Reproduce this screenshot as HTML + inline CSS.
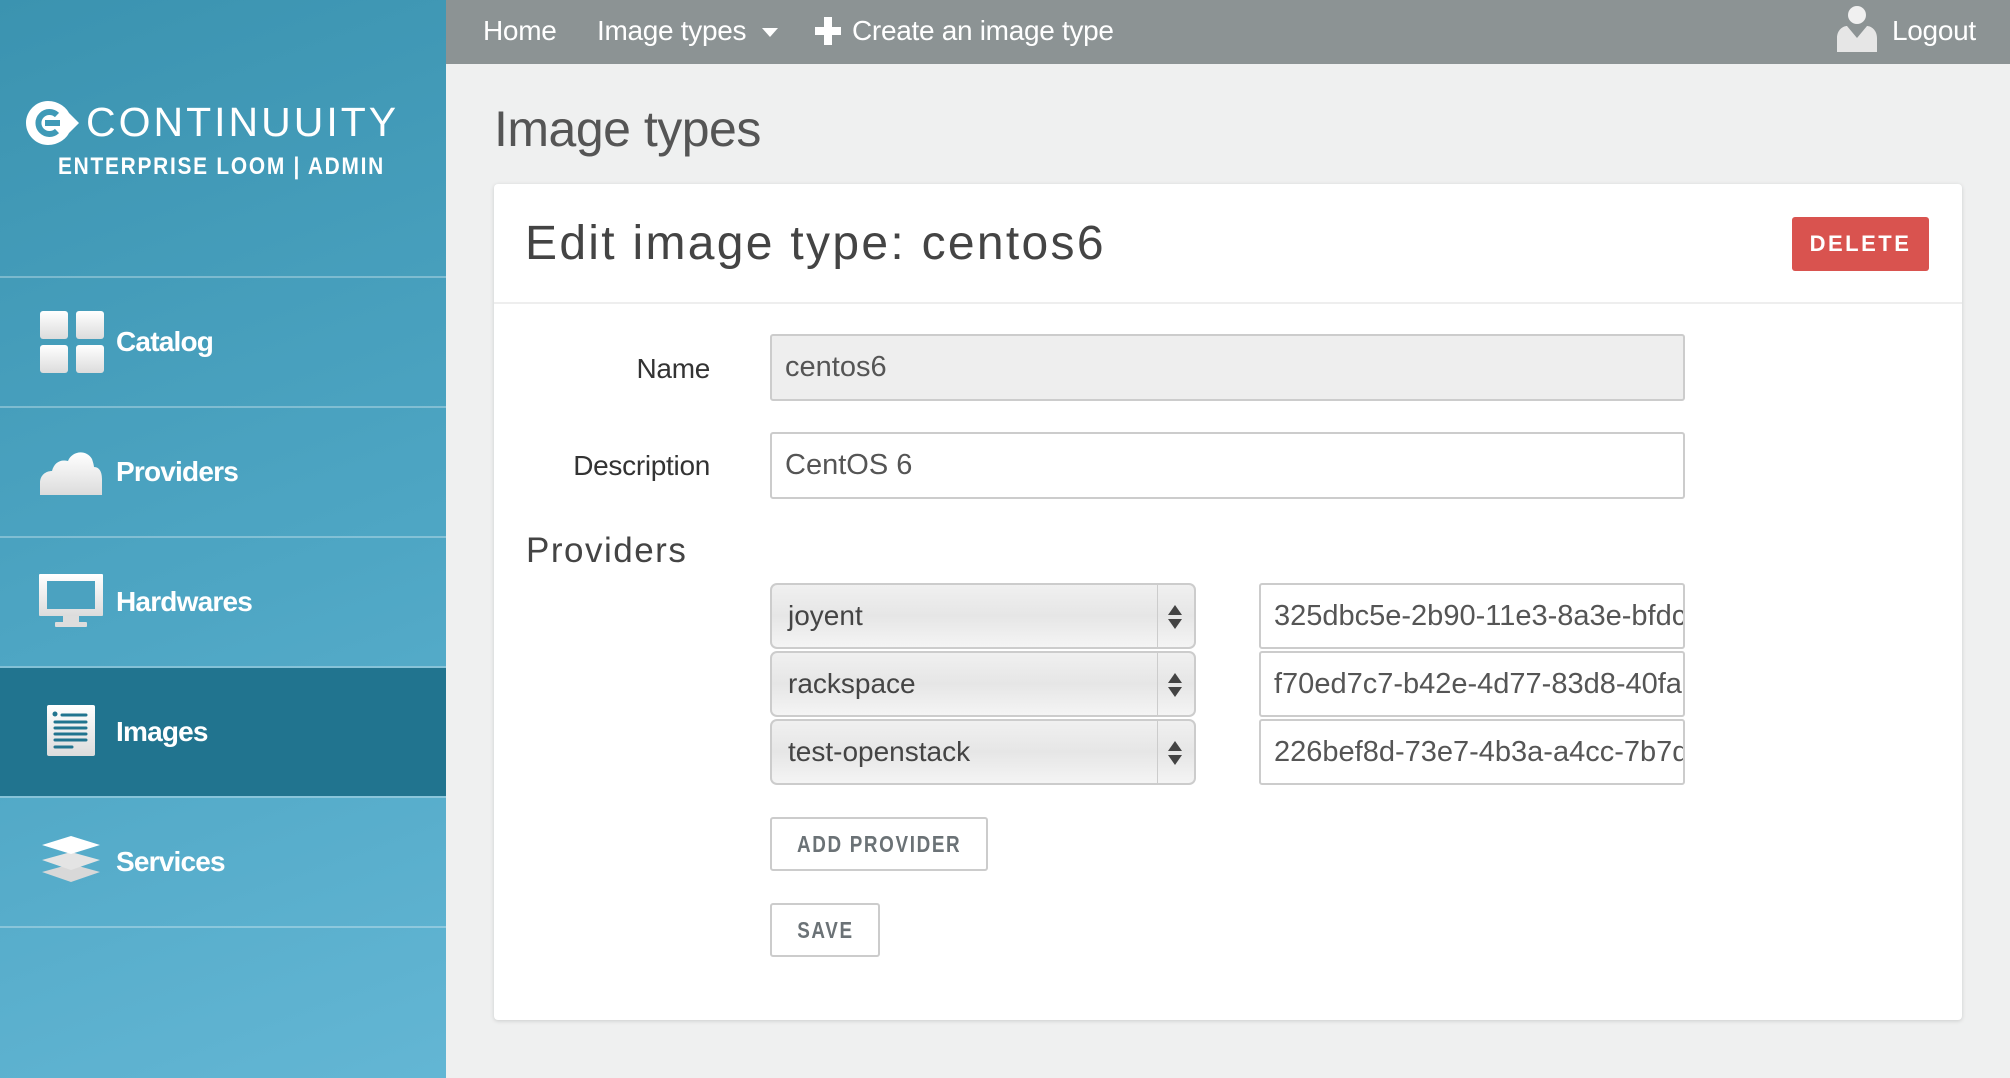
<!DOCTYPE html>
<html><head><meta charset="utf-8"><style>
*{box-sizing:border-box;margin:0;padding:0}
body{width:2010px;height:1078px;overflow:hidden;background:#eff0f0;font-family:"Liberation Sans",Arial,sans-serif;position:relative}
.side{position:absolute;left:0;top:0;width:446px;height:1078px;background:linear-gradient(160deg,#3b93b0 0%,#4ea6c4 55%,#63b6d4 100%)}
.sep{position:absolute;left:0;width:446px;height:2px;background:rgba(255,255,255,.3)}
.item{position:absolute;left:0;width:446px;height:128px;color:#fff;font-size:28px;font-weight:bold;letter-spacing:-0.8px}
.item span{position:absolute;left:116px;top:50%;transform:translateY(-50%)}
.item svg{position:absolute;left:38px;top:50%;transform:translateY(-50%)}
.top{position:absolute;left:446px;top:0;right:0;height:64px;background:#8c9394;color:#fff;font-size:28px}
.top span{position:absolute;top:15px;letter-spacing:-0.3px}
.abs{position:absolute;white-space:nowrap}
.card{position:absolute;left:494px;top:184px;width:1468px;height:836px;background:#fff;border-radius:4px;box-shadow:0 1px 4px rgba(0,0,0,.15)}
.lbl{position:absolute;font-size:28px;color:#333;text-align:right;width:300px;letter-spacing:-0.3px}
.inp{position:absolute;border:2px solid #ccc;border-radius:3px;background:#fff;font-size:29px;color:#555;padding-left:13px;display:flex;align-items:center;overflow:hidden;white-space:nowrap}
.sel{position:absolute;left:770px;width:426px;height:66px;border:2px solid #ccc;border-radius:7px;background:linear-gradient(#f0f0f0,#e6e6e6 50%,#f4f4f4);font-size:28px;color:#444;padding-left:16px;display:flex;align-items:center}
.sel i{position:absolute;right:36px;top:0;bottom:0;border-left:1px solid #ccc}
.sel b{position:absolute;right:12px;top:50%;transform:translateY(-50%);width:14px;height:24px}
.btn{position:absolute;border:2px solid #ccc;border-radius:3px;background:#fff;color:#6b7276;font-weight:bold;font-size:23px;letter-spacing:2px;display:flex;align-items:center;justify-content:center}
.btn span{display:inline-block;transform:scaleX(0.82)}
</style></head><body>
<div class="side">
  <svg class="abs" style="left:26px;top:101px" width="54" height="44" viewBox="0 0 54 44">
    <path d="M22 0 C32 0 40 6 43 12 L53 22 L43 32 C40 38 32 44 22 44 C10 44 0 34 0 22 C0 10 10 0 22 0Z" fill="#fff"/>
    <path d="M31 14 A11 11 0 1 0 31 30" stroke="#3f9ab7" stroke-width="6" fill="none"/>
    <rect x="19" y="19" width="15" height="6" fill="#3f9ab7"/>
  </svg>
  <div class="abs" style="left:86px;top:99px;font-size:41px;color:#fff;letter-spacing:3px">CONTINUUITY</div>
  <div class="abs" style="left:58px;top:153px;font-size:24px;color:#fff;font-weight:bold;letter-spacing:2px;transform:scaleX(0.87);transform-origin:left">ENTERPRISE LOOM | ADMIN</div>
  <div class="sep" style="top:276px"></div>
  <div class="item" style="top:278px"><svg width="66" height="66" viewBox="0 0 66 66"><defs><linearGradient id="g" x1="0" y1="0" x2="0" y2="1"><stop offset="0" stop-color="#fff"/><stop offset="1" stop-color="#dcdcdc"/></linearGradient></defs><rect x="2" y="2" width="28" height="28" rx="3" fill="url(#g)"/><rect x="38" y="2" width="28" height="28" rx="3" fill="url(#g)"/><rect x="2" y="36" width="28" height="28" rx="3" fill="url(#g)"/><rect x="38" y="36" width="28" height="28" rx="3" fill="url(#g)"/></svg><span>Catalog</span></div>
  <div class="sep" style="top:406px"></div>
  <div class="item" style="top:408px"><svg width="66" height="50" viewBox="0 0 66 50"><path d="M2 48 L2 36 C2 28 8 24 14 24 C16 16 22 12 30 14 C34 4 48 2 54 12 C56 18 56 20 56 20 C62 20 64 26 64 32 L64 48Z" fill="url(#g)"/></svg><span>Providers</span></div>
  <div class="sep" style="top:536px"></div>
  <div class="item" style="top:538px"><svg width="66" height="56" viewBox="0 0 66 56"><rect x="1" y="0" width="64" height="42" rx="1" fill="url(#g)"/><rect x="9" y="7" width="48" height="28" fill="#4ba2c0"/><rect x="25" y="42" width="16" height="6" fill="#ddd"/><rect x="17" y="48" width="32" height="5" rx="1" fill="#ddd"/></svg><span>Hardwares</span></div>
  <div class="sep" style="top:666px"></div>
  <div class="item" style="top:668px;background:#21748f;height:128px"><svg width="66" height="54" viewBox="0 0 66 54"><rect x="9" y="0" width="48" height="51" rx="2" fill="url(#g)"/><g stroke="#21748f" stroke-width="3" stroke-linecap="round"><circle cx="17" cy="9" r="2.5" fill="#21748f" stroke="none"/><line x1="24" y1="10" x2="48" y2="10"/><line x1="17" y1="17" x2="48" y2="17"/><line x1="17" y1="23" x2="48" y2="23"/><line x1="17" y1="29" x2="48" y2="29"/><line x1="17" y1="35" x2="48" y2="35"/><line x1="17" y1="42" x2="34" y2="42"/></g></svg><span>Images</span></div>
  <div class="sep" style="top:796px"></div>
  <div class="item" style="top:798px"><svg width="66" height="60" viewBox="0 0 66 60"><path d="M33 32 L62 40 L33 50 L4 40Z" fill="#d8d8d8"/><path d="M33 20 L62 28 L33 38 L4 28Z" fill="#e4e4e4"/><path d="M33 4 L62 13 L33 22 L4 13Z" fill="#fff"/></svg><span>Services</span></div>
  <div class="sep" style="top:926px"></div>
</div>
<div class="top">
  <span style="left:37px">Home</span>
  <span style="left:151px">Image types</span>
  <svg class="abs" style="left:316px;top:28px" width="16" height="9"><path d="M0 0H16L8 9Z" fill="#fff"/></svg>
  <svg class="abs" style="left:369px;top:17px" width="26" height="28"><rect x="9" y="0" width="8" height="28" fill="#fff"/><rect x="0" y="10" width="26" height="8" fill="#fff"/></svg>
  <span style="left:406px">Create an image type</span>
  <svg class="abs" style="left:1389px;top:6px" width="44" height="48" viewBox="0 0 44 48"><circle cx="22" cy="9" r="9" fill="#f0f0f0"/><path d="M2 46 L2 32 C2 24 8 20 12 20 L22 32 L32 20 C36 20 42 24 42 32 L42 46Z" fill="#e6e6e6"/></svg>
  <span style="left:1446px">Logout</span>
</div>
<div class="abs" style="left:494px;top:100px;font-size:50px;color:#555;letter-spacing:-0.5px">Image types</div>
<div class="card">
  <div class="abs" style="left:31px;top:32px;font-size:48px;color:#444;letter-spacing:2.3px">Edit image type: centos6</div>
  <div class="abs" style="left:1298px;top:33px;width:137px;height:54px;background:#d9534f;border-radius:3px;color:#fff;font-size:22px;font-weight:bold;letter-spacing:2.5px;display:flex;align-items:center;justify-content:center">DELETE</div>
  <div class="abs" style="left:0;top:118px;width:1468px;height:2px;background:#eee"></div>
</div>
<div class="lbl" style="left:410px;top:353px">Name</div>
<div class="inp" style="left:770px;top:334px;width:915px;height:67px;background:#eee">centos6</div>
<div class="lbl" style="left:410px;top:450px">Description</div>
<div class="inp" style="left:770px;top:432px;width:915px;height:67px">CentOS 6</div>
<div class="abs" style="left:526px;top:531px;font-size:35px;color:#444;letter-spacing:1.5px">Providers</div>
<div class="sel" style="top:583px">joyent<i></i><b><svg width="14" height="24"><path d="M7 0L14 10H0Z M0 14H14L7 24Z" fill="#444"/></svg></b></div>
<div class="sel" style="top:651px">rackspace<i></i><b><svg width="14" height="24"><path d="M7 0L14 10H0Z M0 14H14L7 24Z" fill="#444"/></svg></b></div>
<div class="sel" style="top:719px">test-openstack<i></i><b><svg width="14" height="24"><path d="M7 0L14 10H0Z M0 14H14L7 24Z" fill="#444"/></svg></b></div>
<div class="inp" style="left:1259px;top:583px;width:426px;height:66px">325dbc5e-2b90-11e3-8a3e-bfdcb1582a8d</div>
<div class="inp" style="left:1259px;top:651px;width:426px;height:66px">f70ed7c7-b42e-4d77-83d8-40fa29a9e80c</div>
<div class="inp" style="left:1259px;top:719px;width:426px;height:66px">226bef8d-73e7-4b3a-a4cc-7b7da35c2de6</div>
<div class="btn" style="left:770px;top:817px;width:218px;height:54px"><span>ADD PROVIDER</span></div>
<div class="btn" style="left:770px;top:903px;width:110px;height:54px"><span>SAVE</span></div>
</body></html>
